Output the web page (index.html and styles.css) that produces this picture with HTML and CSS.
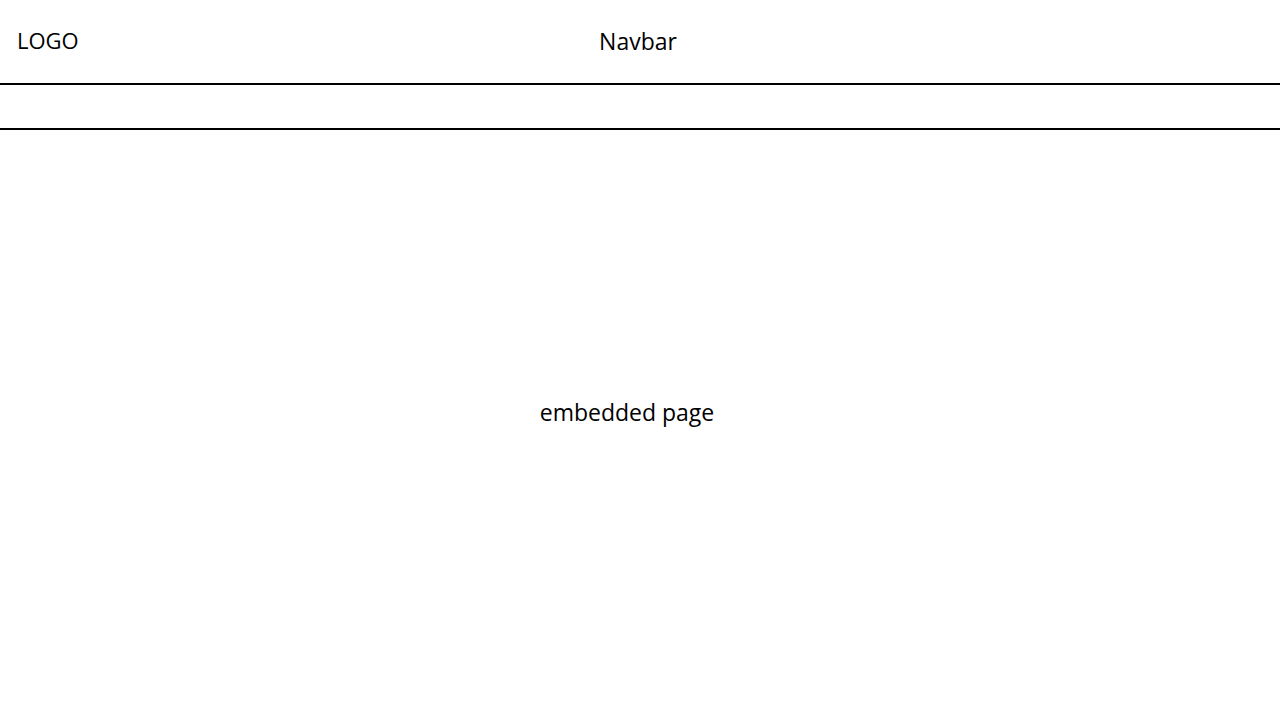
FILE: index.html
```html
<!DOCTYPE html>
<html lang="en">
<head>
    <meta charset="UTF-8">
    <meta name="viewport" content="width=device-width, initial-scale=1.0">
    <title>Layout</title>
    <link rel="stylesheet" href="styles.css">
</head>
<body>
    <header class="navbar">
        <div class="logo">LOGO</div>
        <div class="nav-title">Navbar</div>
    </header>

    <div class="subbar"></div>

    <main class="embedded">
        <span class="embedded-text">embedded page</span>
    </main>
</body>
</html>
```

FILE: styles.css
```css
* {
    margin: 0;
    padding: 0;
    box-sizing: border-box;
    font-family: 'Open Sans', 'Noto Sans', sans-serif;
}

body {
    background-color: #ffffff;
    color: #000000;
    height: 720px;
    display: flex;
    flex-direction: column;
}

.navbar {
    height: 85px;
    border-bottom: 2px solid #000;
    display: flex;
    position: relative;
}

.logo {
    font-size: 22px;
    padding: 25px 0 0 17px;
    line-height: 30px;
}

.nav-title {
    position: absolute;
    left: 0;
    right: 0;
    top: 26px;
    text-align: center;
    font-size: 23px;
    line-height: 30px;
    padding-right: 4px;
}

.subbar {
    height: 45px;
    border-bottom: 2px solid #000;
}

.embedded {
    flex: 1;
    display: flex;
    justify-content: center;
    align-items: center;
    padding: 0 26px 26px 0;
}

.embedded-text {
    font-size: 23px;
    line-height: 30px;
}
```
